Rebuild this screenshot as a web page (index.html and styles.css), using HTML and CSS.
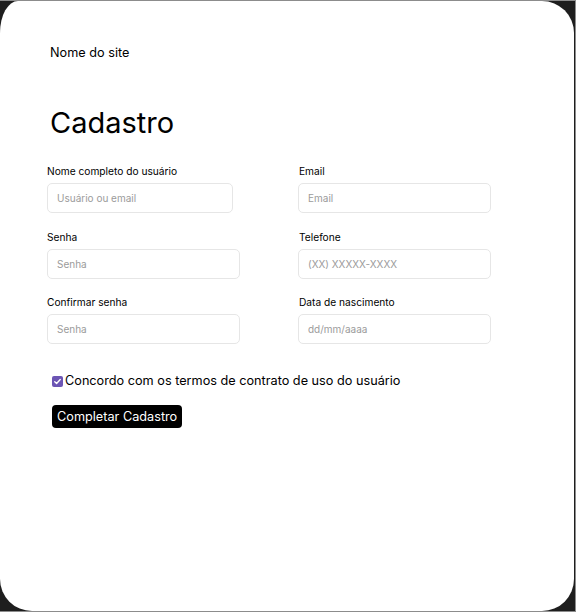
FILE: index.html
```html
<!DOCTYPE html>
<html lang="pt-BR">
<head>
<meta charset="utf-8">
<title>Cadastro</title>
<link rel="stylesheet" href="styles.css">
</head>
<body>
<div class="frame">
  <main class="card">
    <header class="site-name">Nome do site</header>
    <h1 class="title">Cadastro</h1>
    <form class="form">
      <div class="grid">
        <label class="field">
          <span class="label">Nome completo do usuário</span>
          <span class="input input-short">Usuário ou email</span>
        </label>
        <label class="field">
          <span class="label">Email</span>
          <span class="input">Email</span>
        </label>
        <label class="field">
          <span class="label">Senha</span>
          <span class="input">Senha</span>
        </label>
        <label class="field">
          <span class="label">Telefone</span>
          <span class="input">(XX) XXXXX-XXXX</span>
        </label>
        <label class="field">
          <span class="label">Confirmar senha</span>
          <span class="input">Senha</span>
        </label>
        <label class="field">
          <span class="label">Data de nascimento</span>
          <span class="input">dd/mm/aaaa</span>
        </label>
      </div>
      <div class="agree">
        <span class="check">
          <svg width="12" height="12" viewBox="0 0 12 12"><path d="M3 6.2 L5 8.1 L9 3.9" fill="none" stroke="#fff" stroke-width="1.5" stroke-linecap="round" stroke-linejoin="round"/></svg>
        </span>
        <span class="agree-text">Concordo com os termos de contrato de uso do usuário</span>
      </div>
      <div class="actions">
        <span class="button">Completar Cadastro</span>
      </div>
    </form>
  </main>
</div>
</body>
</html>
```
FILE: styles.css
```css
html, body {
  margin: 0;
  padding: 0;
}
body {
  background: #1e1e1e;
  font-family: Inter, "Liberation Sans", sans-serif;
  color: #000;
}
.frame {
  width: 576px;
  height: 612px;
  box-sizing: border-box;
  border-top: 1px solid #8c8c8c;
  border-right: 1px solid #8c8c8c;
  border-bottom: 1px solid #8c8c8c;
  display: flex;
}
.card {
  flex: 1;
  margin-right: 1px;
  background: #fff;
  border-radius: 18px 32px 32px 32px / 32px 32px 32px 32px;
  padding: 44px 0 0 47px;
  box-sizing: border-box;
}
.site-name {
  font-size: 12.7px;
  line-height: 16px;
  padding-left: 3px;
}
.title {
  margin: 44px 0 0 0;
  padding-left: 3px;
  font-size: 29px;
  line-height: 35px;
  font-weight: 400;
}
.form {
  margin-top: 24px;
}
.grid {
  display: grid;
  grid-template-columns: 193px 193px;
  column-gap: 58px;
  row-gap: 16.5px;
}
.field {
  display: flex;
  flex-direction: column;
}
.label {
  font-size: 10.2px;
  line-height: 14px;
  margin-bottom: 5px;
}
.field:nth-child(even) .label {
  padding-left: 1px;
}
.input {
  height: 30px;
  box-sizing: border-box;
  border: 1px solid #e6e6e6;
  border-radius: 5px;
  padding: 0 9px;
  display: flex;
  align-items: center;
  font-size: 10px;
  color: #9b9b9b;
  background: #fff;
}
.input-short {
  width: 186px;
}
.agree {
  margin-top: 29px;
  padding-left: 5px;
  display: flex;
  align-items: center;
  gap: 2px;
}
.check {
  width: 11px;
  height: 11px;
  background: #6c55b4;
  border-radius: 2px;
  display: flex;
  align-items: center;
  justify-content: center;
}
.check svg {
  width: 11px;
  height: 11px;
}
.agree-text {
  font-size: 12.7px;
  line-height: 16px;
}
.actions {
  margin-top: 16px;
  padding-left: 5px;
  display: flex;
}
.button {
  background: #000;
  color: #fff;
  font-size: 12.7px;
  line-height: 23px;
  height: 23px;
  padding: 0 5px;
  border-radius: 4px;
}
```
